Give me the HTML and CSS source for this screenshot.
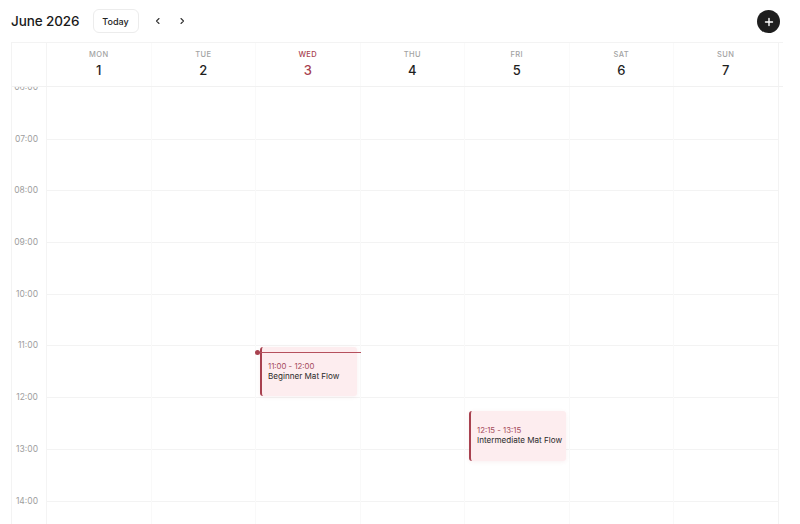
FILE: index.html
```html
<!DOCTYPE html>
<html lang="en">
<head>
    <meta charset="UTF-8">
    <meta name="viewport" content="width=device-width, initial-scale=1.0">
    <title>Schedule</title>
    <link rel="stylesheet" href="styles.css">
</head>
<body>
<div class="page">
    <header class="topbar">
        <h1 class="month">June 2026</h1>
        <button class="today-btn">Today</button>
        <button class="nav-btn" aria-label="Previous week">
            <svg width="10" height="10" viewBox="0 0 10 10"><path d="M6 2.5 3.5 5 6 7.5" fill="none" stroke="#333" stroke-width="1.1" stroke-linecap="round" stroke-linejoin="round"/></svg>
        </button>
        <button class="nav-btn" aria-label="Next week">
            <svg width="10" height="10" viewBox="0 0 10 10"><path d="M4 2.5 6.5 5 4 7.5" fill="none" stroke="#333" stroke-width="1.1" stroke-linecap="round" stroke-linejoin="round"/></svg>
        </button>
        <button class="add-btn" aria-label="Add class">
            <svg width="10" height="10" viewBox="0 0 10 10"><path d="M5 1.5v7M1.5 5h7" stroke="#fff" stroke-width="1.4" stroke-linecap="round"/></svg>
        </button>
    </header>

    <div class="calendar">
        <div class="week-head">
            <div class="gutter-head"></div>
            <div class="day-head"><span class="dow">Mon</span><span class="date">1</span></div>
            <div class="day-head"><span class="dow">Tue</span><span class="date">2</span></div>
            <div class="day-head today"><span class="dow">Wed</span><span class="date">3</span></div>
            <div class="day-head"><span class="dow">Thu</span><span class="date">4</span></div>
            <div class="day-head"><span class="dow">Fri</span><span class="date">5</span></div>
            <div class="day-head"><span class="dow">Sat</span><span class="date">6</span></div>
            <div class="day-head"><span class="dow">Sun</span><span class="date">7</span></div>
        </div>

        <div class="week-body">
            <div class="gutter" id="gutter"></div>
            <div class="day" data-day="1"></div>
            <div class="day" data-day="2"></div>
            <div class="day" data-day="3"></div>
            <div class="day" data-day="4"></div>
            <div class="day" data-day="5"></div>
            <div class="day" data-day="6"></div>
            <div class="day" data-day="7"></div>
        </div>
    </div>
</div>
<script>
    document.addEventListener('DOMContentLoaded', function () {
        const HOUR = 51.7
        const START = 6
        const END = 15
        const gutter = document.getElementById('gutter')
        const days = document.querySelectorAll('.week-body .day')

        for (let h = START; h < END; h++) {
            const label = document.createElement('div')
            label.className = 'hour-label'
            label.innerHTML = '<span>' + String(h).padStart(2, '0') + ':00</span>'
            gutter.appendChild(label)
        }

        days.forEach(day => {
            for (let h = START; h < END; h++) {
                const slot = document.createElement('div')
                slot.className = 'slot'
                day.appendChild(slot)
            }
        })

        const classes = [
            {day: 3, start: '11:00', end: '12:00', title: 'Beginner Mat Flow'},
            {day: 5, start: '12:15', end: '13:15', title: 'Intermediate Mat Flow'}
        ]

        function toHours(t) {
            const parts = t.split(':')
            return parseInt(parts[0], 10) + parseInt(parts[1], 10) / 60
        }

        classes.forEach(c => {
            const top = (toHours(c.start) - START) * HOUR
            const height = (toHours(c.end) - toHours(c.start)) * HOUR
            const el = document.createElement('div')
            el.className = 'event'
            el.style.top = (top + 1) + 'px'
            el.style.height = (height - 2) + 'px'
            el.innerHTML = '<span class="event-time">' + c.start + ' - ' + c.end + '</span>' +
                '<span class="event-title">' + c.title + '</span>'
            days[c.day - 1].appendChild(el)
        })

        // current time marker on today
        const now = document.createElement('div')
        now.className = 'now-line'
        now.style.top = ((toHours('11:08') - START) * HOUR) + 'px'
        days[2].appendChild(now)
    })
</script>
</body>
</html>
```

FILE: styles.css
```css
*, *:before, *:after {
    box-sizing: border-box;
}

body {
    font-family: Inter, 'Helvetica Neue', Arial, sans-serif;
    margin: 0;
    padding: 0;
    background-color: #ffffff;
    color: #1f1f1f;
}

.page {
    height: 524px;
    display: flex;
    flex-direction: column;
    overflow: hidden;
}

.topbar {
    height: 42px;
    flex: 0 0 auto;
    display: flex;
    align-items: center;
    padding: 0 20px 0 11px;
}

.month {
    margin: 0 13px 0 0;
    font-size: 13.5px;
    font-weight: 500;
    letter-spacing: -0.1px;
    color: #1a1a1a;
}

.today-btn {
    height: 24px;
    width: 46px;
    padding: 0;
    border: 1px solid #ececec;
    border-radius: 6px;
    background-color: #ffffff;
    font-family: inherit;
    font-size: 9px;
    font-weight: 500;
    color: #222222;
    margin-right: 7px;
}

.nav-btn {
    width: 24px;
    height: 24px;
    border: none;
    background: none;
    padding: 0;
    display: flex;
    align-items: center;
    justify-content: center;
}

.add-btn {
    margin-left: auto;
    width: 23px;
    height: 23px;
    border-radius: 50%;
    border: none;
    background-color: #1e1e1e;
    padding: 0;
    display: flex;
    align-items: center;
    justify-content: center;
    margin-top: 1px;
}

.calendar {
    flex: 1 1 auto;
    margin: 0 17px 0 11px;
    border-left: 1px solid #f3f3f3;
    border-top: 1px solid #f3f3f3;
    display: flex;
    flex-direction: column;
    min-height: 0;
}

.week-head,
.week-body {
    display: grid;
    grid-template-columns: 35px repeat(7, 104.5px);
}

.week-head {
    flex: 0 0 auto;
    height: 44px;
    border-bottom: 1px solid #f1f1f1;
}

.gutter-head {
    border-right: 1px solid #f4f4f4;
}

.day-head {
    display: flex;
    flex-direction: column;
    align-items: center;
    padding-top: 7px;
    border-right: 1px solid #fafafa;
}

.day-head:last-child {
    border-right-color: #f3f3f3;
}

.dow {
    font-size: 7.5px;
    font-weight: 500;
    letter-spacing: 0.4px;
    text-transform: uppercase;
    color: #a3a3a3;
    line-height: 10px;
}

.date {
    margin-top: 2px;
    font-size: 13px;
    font-weight: 500;
    line-height: 16px;
    color: #1f1f1f;
}

.day-head.today .dow,
.day-head.today .date {
    color: #a8414f;
}

.week-body {
    flex: 1 1 auto;
    overflow: hidden;
    min-height: 0;
}

.gutter {
    border-right: 1px solid #f4f4f4;
}

.hour-label {
    display: flow-root;
    height: 51.7px;
    text-align: right;
    padding-right: 8px;
}

.hour-label span {
    display: block;
    margin-top: -6px;
    font-size: 8.5px;
    line-height: 12px;
    color: #9e9e9e;
}

.day {
    position: relative;
    border-right: 1px solid #f9f9f9;
}

.day:last-child {
    border-right-color: #f3f3f3;
}

.slot {
    height: 51.7px;
    border-top: 1px solid #f3f3f3;
}

.slot:first-child {
    border-top-color: transparent;
}

.event {
    position: absolute;
    left: 4px;
    right: 3px;
    display: flex;
    flex-direction: column;
    justify-content: center;
    padding: 0 6px;
    background-color: #fdedef;
    border-left: 2px solid #a8414f;
    border-radius: 3px;
    box-shadow: 0 1px 4px rgba(168, 65, 79, 0.08);
    white-space: nowrap;
}

.event-time {
    font-size: 7.8px;
    line-height: 10px;
    color: #a54b5b;
}

.event-title {
    font-size: 8.1px;
    line-height: 11px;
    color: #2a2a2a;
}

.now-line {
    position: absolute;
    left: 1px;
    right: -1px;
    height: 1px;
    background-color: #b5505d;
}

.now-line:before {
    content: '';
    position: absolute;
    left: -2px;
    top: -2px;
    width: 5px;
    height: 5px;
    border-radius: 50%;
    background-color: #a8414f;
}
```
